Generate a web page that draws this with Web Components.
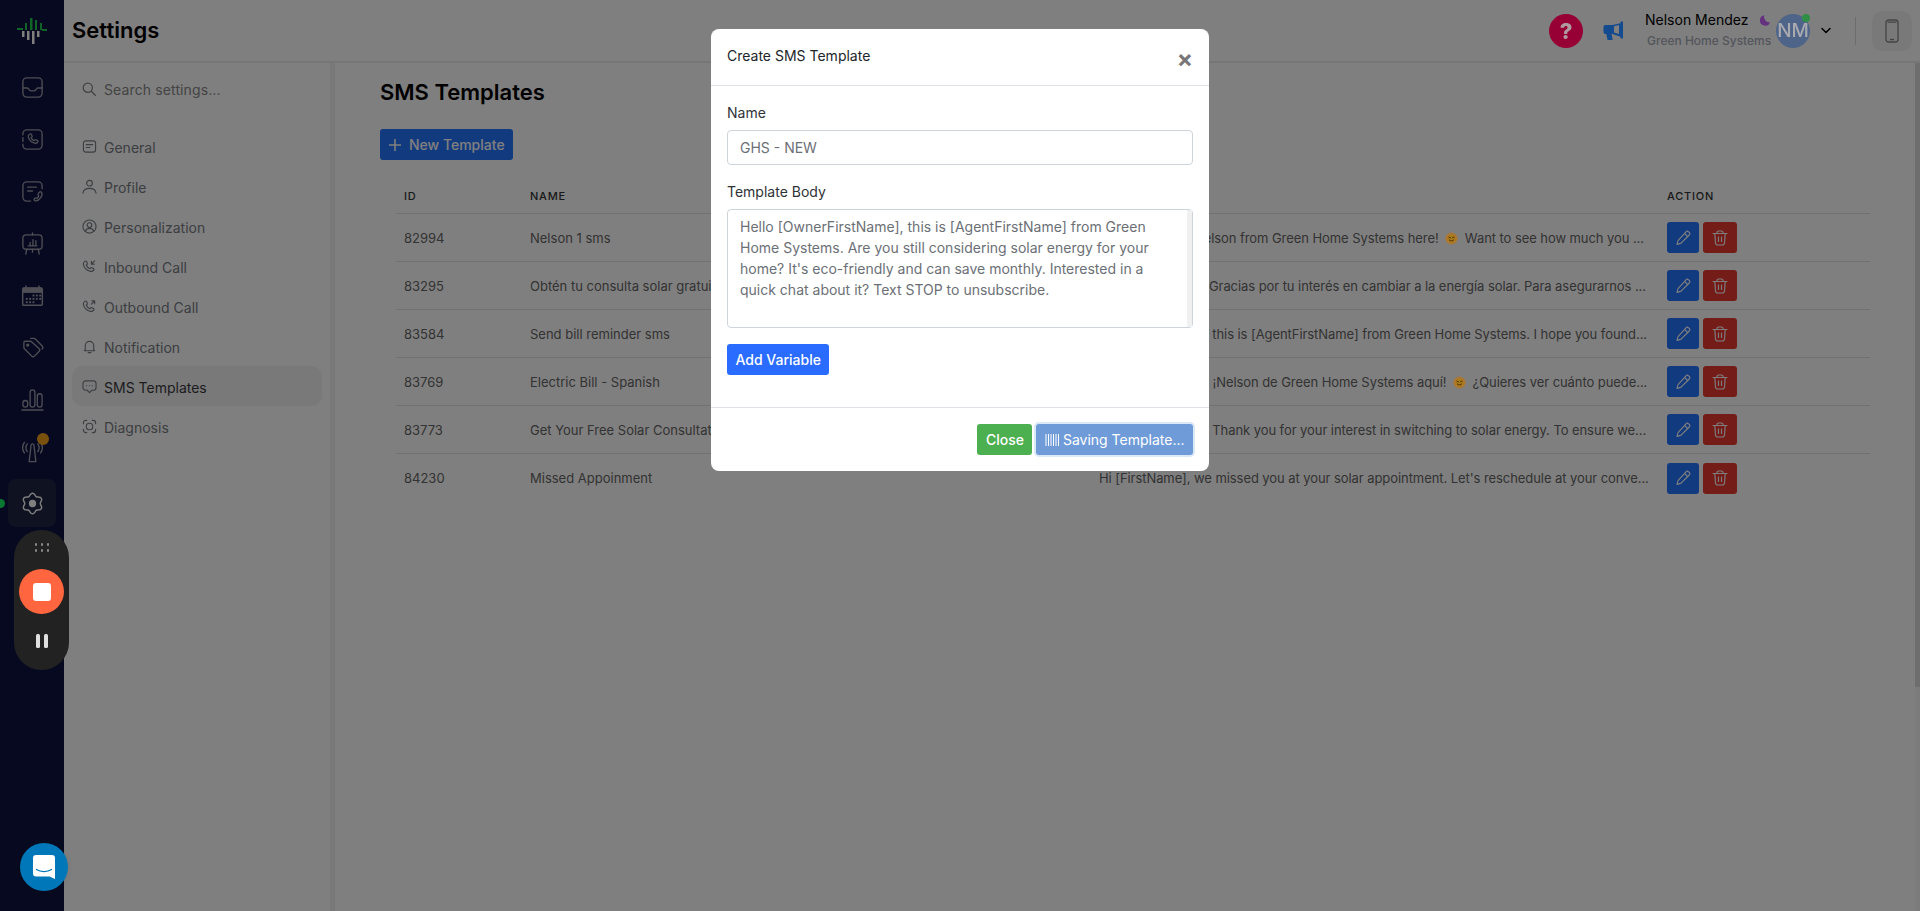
<!DOCTYPE html>
<html lang="en">
<head>
<meta charset="utf-8">
<title>Settings - SMS Templates</title>
<style>
  html, body { margin: 0; height: 100%; overflow: hidden; background: #fff; }
  body { font-family: Inter, "Noto Sans", sans-serif; font-size: 14px; }
</style>
</head>
<body>
<app-shell>
  <rail-nav slot="rail">
    <rail-item icon="inbox"></rail-item>
    <rail-item icon="phone"></rail-item>
    <rail-item icon="callnote"></rail-item>
    <rail-item icon="board"></rail-item>
    <rail-item icon="calendar"></rail-item>
    <rail-item icon="tags"></rail-item>
    <rail-item icon="chart"></rail-item>
    <rail-item icon="antenna" badge></rail-item>
    <rail-item icon="gear" active></rail-item>
  </rail-nav>
  <top-bar slot="top" heading="Settings"></top-bar>
  <settings-menu slot="menu">
    <menu-item icon="general">General</menu-item>
    <menu-item icon="profile">Profile</menu-item>
    <menu-item icon="personal">Personalization</menu-item>
    <menu-item icon="inbound">Inbound Call</menu-item>
    <menu-item icon="outbound">Outbound Call</menu-item>
    <menu-item icon="bell">Notification</menu-item>
    <menu-item icon="sms" active>SMS Templates</menu-item>
    <menu-item icon="diagnosis">Diagnosis</menu-item>
  </settings-menu>
  <sms-page slot="page">
    <sms-row rid="82994" name="Nelson 1 sms">Hi [FirstName], Nelson from Green Home Systems here! <sun-emoji></sun-emoji> Want to see how much you ...</sms-row>
    <sms-row rid="83295" name="Obtén tu consulta solar gratuita">Hola [FirstName]! Gracias por tu interés en cambiar a la energía solar. Para asegurarnos ...</sms-row>
    <sms-row rid="83584" name="Send bill reminder sms">Hello [FirstName], this is [AgentFirstName] from Green Home Systems. I hope you found...</sms-row>
    <sms-row rid="83769" name="Electric Bill - Spanish">Hola [FirstName]!&nbsp; ¡Nelson de Green Home Systems aquí! <sun-emoji></sun-emoji> ¿Quieres ver cuánto puede...</sms-row>
    <sms-row rid="83773" name="Get Your Free Solar Consultation">Hello [FirstName]! Thank you for your interest in switching to solar energy. To ensure we...</sms-row>
    <sms-row rid="84230" name="Missed Appoinment">Hi [FirstName], we missed you at your solar appointment. Let's reschedule at your conve...</sms-row>
  </sms-page>
</app-shell>

<modal-dialog heading="Create SMS Template"></modal-dialog>
<recorder-widget></recorder-widget>
<chat-launcher></chat-launcher>

<script>
const line = 'fill="none" stroke="currentColor" stroke-linecap="round" stroke-linejoin="round"'

// six lobed cog outline, lobes at top and bottom
function gearPath() {
  let d = ''
  for (let i = 0; i < 96; i++) {
    const a = i / 96 * Math.PI * 2
    const r = 9.4 + 1.3 * Math.cos(6 * a)
    const x = 12 + r * Math.sin(a)
    const y = 12 - r * Math.cos(a)
    d += (i ? 'L' : 'M') + x.toFixed(2) + ' ' + y.toFixed(2)
  }
  return d + 'z'
}

const railIcons = {
  inbox: `<svg viewBox="0 0 24 24" ${line} stroke-width="1.400"><rect x="2" y="2" width="20" height="20" rx="4"/><path d="M2 12.500h4.500c1 0 1.300 .6 1.700 1.400.4 .9 1.200 1.600 2.300 1.600h3c1.100 0 1.900-.7 2.300-1.600.4-.8 .7-1.400 1.700-1.400H22"/></svg>`,
  phone: `<svg viewBox="0 0 24 24" ${line} stroke-width="1.400"><path d="M2 7V6a4 4 0 0 1 4-4h12a4 4 0 0 1 4 4v12a4 4 0 0 1-4 4H6a4 4 0 0 1-4-4v-1M2 10v4"/><path d="M9 6.500c.7-.6 1.500-.4 1.900 .3l.6 1.300c.3 .6 .2 1.200-.3 1.600l-.6 .5c.5 1.400 1.500 2.400 3 3l.5-.6c.4-.5 1-.6 1.600-.3l1.300 .6c.8 .4 1 1.200 .3 1.900-1 1-2.400 1.300-3.800 .8-3-1-5-3.100-5.800-6.100-.3-1.200 .1-2.200 1.300-3z"/></svg>`,
  callnote: `<svg viewBox="0 0 24 24" ${line} stroke-width="1.400"><path d="M10 22H6a4 4 0 0 1-4-4V6a4 4 0 0 1 4-4h12a4 4 0 0 1 4 4v3"/><path d="M7 7.500h9M7 11.500h5"/><path d="M19.500 12.500c.8-.5 1.600-.2 2 .5.700 1.400 .5 3.300-.9 5.300-1.400 2-3.400 3.400-5.200 3.500-1.300 .1-2.100-1.200-1.500-2.200.5-.7 1.100-1.100 1.800-1 .5 .1 .8 .3 1.100 .5 .8-.5 1.400-1.400 1.700-2.400-.3-.3-.6-.6-.7-1.100-.1-.8 .3-1.600 .7-2.100z"/></svg>`,
  board: `<svg viewBox="0 0 24 24" ${line} stroke-width="1.400"><path d="M12 1v2"/><rect x="2" y="3" width="20" height="15" rx="3.500"/><path d="M7.500 14.500h9M9.500 14v-3M12.500 14V8M15.500 14v-5M6 18l-1 5M18 18l1 5M12 18v3"/></svg>`,
  calendar: `<svg viewBox="0 0 24 24"><path d="M3 3.500h1.500V1.500h1.500v2h12v-2h1.500v2H21a2 2 0 0 1 2 2V21a2 2 0 0 1-2 2H3a2 2 0 0 1-2-2V5.500a2 2 0 0 1 2-2zm-.5 5.500V21c0 .3 .2 .5 .5 .5h18c.3 0 .5-.2 .5-.5V9z" fill="currentColor" fill-rule="evenodd"/><path d="M2 3.800h20v5.200H2z" fill="currentColor"/><g fill="currentColor"><rect x="12" y="11" width="2" height="2"/><rect x="15.500" y="11" width="2" height="2"/><rect x="19" y="11" width="2" height="2"/><rect x="5" y="14.500" width="2" height="2"/><rect x="8.500" y="14.500" width="2" height="2"/><rect x="12" y="14.500" width="2" height="2"/><rect x="15.500" y="14.500" width="2" height="2"/><rect x="19" y="14.500" width="2" height="2"/><rect x="5" y="18" width="2" height="2"/><rect x="8.500" y="18" width="2" height="2"/><rect x="12" y="18" width="2" height="2"/></g></svg>`,
  tags: `<svg viewBox="0 0 24 24" ${line} stroke-width="1.400"><path d="M9.500 5.500H4.500a1.500 1.500 0 0 0-1.500 1.500v5c0 .5 .2 1 .6 1.400l7.600 7.600c.8 .8 2 .8 2.800 0l5-5c.8-.8 .8-2 0-2.800L11 5.900a2 2 0 0 0-1.500-.4z"/><path d="M10 2.500h3.500c.5 0 1 .2 1.400 .6l7 7c1.100 1.100 1.100 2.500 .2 3.500"/><circle cx="7" cy="9.500" r="1" fill="currentColor"/></svg>`,
  chart: `<svg viewBox="0 0 24 24" ${line} stroke-width="1.400"><rect x="2" y="13" width="5" height="7" rx="2.500"/><rect x="9.500" y="2" width="5" height="18" rx="2.500"/><rect x="17" y="6" width="5" height="14" rx="2.500"/><path d="M1 23h22"/></svg>`,
  antenna: `<svg viewBox="0 0 24 24" ${line} stroke-width="1.400"><path d="M12 4c-.8 0-1.400 .5-1.500 1.300L8.500 22.500h7L13.500 5.300C13.400 4.500 12.800 4 12 4z"/><path d="M6.500 4a7 7 0 0 0 0 8M3.500 2.500a10 10 0 0 0 0 11M17.500 4a7 7 0 0 1 0 8M20.500 2.500a10 10 0 0 1 0 11"/></svg>`,
  gear: `<svg viewBox="0 0 24 24" ${line} stroke-width="1.500"><path d="${gearPath()}"/><circle cx="12" cy="12" r="3.800" fill="currentColor" stroke="none"/></svg>`
}

const menuIcons = {
  general: `<svg viewBox="0 0 16 16" ${line} stroke-width="1.200"><rect x="1.500" y="2" width="13" height="12" rx="2.500"/><path d="M4.500 6h7M4.500 9h4"/></svg>`,
  profile: `<svg viewBox="0 0 16 16" ${line} stroke-width="1.200"><circle cx="8" cy="4.500" r="3"/><path d="M1 15c.5-3.400 3.300-5 7-5s6.500 1.600 7 5"/></svg>`,
  personal: `<svg viewBox="0 0 16 16" ${line} stroke-width="1.200"><circle cx="8" cy="8" r="7"/><circle cx="8" cy="6.500" r="2.500"/><path d="M3.500 13c.8-2 2.400-3 4.500-3s3.700 1 4.500 3"/></svg>`,
  inbound: `<svg viewBox="0 0 16 16" ${line} stroke-width="1.200"><path d="M3 2.500c.7-.7 1.500-.5 1.900 .3l.7 1.400c.3 .6 .2 1.200-.3 1.600l-.7 .6c.7 1.900 2 3.300 3.900 4l.6-.7c.4-.5 1-.6 1.600-.3l1.400 .7c.8 .4 1 1.200 .3 1.900-1.100 1.100-2.500 1.500-4 1-3.500-1.100-6-3.700-6.900-7.100-.3-1.300 .2-2.500 1.500-3.400z"/><path d="M13.500 2 10 5.500M10 2.500v3h3"/></svg>`,
  outbound: `<svg viewBox="0 0 16 16" ${line} stroke-width="1.200"><path d="M3 2.500c.7-.7 1.500-.5 1.900 .3l.7 1.400c.3 .6 .2 1.200-.3 1.600l-.7 .6c.7 1.900 2 3.300 3.900 4l.6-.7c.4-.5 1-.6 1.600-.3l1.400 .7c.8 .4 1 1.200 .3 1.900-1.100 1.100-2.500 1.500-4 1-3.500-1.100-6-3.700-6.900-7.100-.3-1.300 .2-2.500 1.500-3.400z"/><path d="M10 5.500 13.500 2M10.500 2h3v3"/></svg>`,
  bell: `<svg viewBox="0 0 16 16" ${line} stroke-width="1.200"><path d="M3.500 11.500V7a4.500 4.500 0 0 1 9 0v4.500l1 1H2.500z"/><path d="M6.500 14.500h3"/></svg>`,
  sms: `<svg viewBox="0 0 16 16" ${line} stroke-width="1.200"><path d="M4 2h8a3 3 0 0 1 3 3v4a3 3 0 0 1-3 3h-1.500L8 14.500 5.500 12H4a3 3 0 0 1-3-3V5a3 3 0 0 1 3-3z"/><path d="M5 7h.01M8 7h.01M11 7h.01"/></svg>`,
  diagnosis: `<svg viewBox="0 0 16 16" ${line} stroke-width="1.200"><path d="M1.500 5V4a2.500 2.500 0 0 1 2.500-2.500h1M11 1.500h1A2.500 2.500 0 0 1 14.500 4v1M14.500 11v1a2.500 2.500 0 0 1-2.500 2.500h-1M5 14.500H4A2.500 2.500 0 0 1 1.500 12v-1"/><circle cx="8" cy="8" r="3.500"/></svg>`
}

class AppShell extends HTMLElement {
  constructor() {
    super()
    this.attachShadow({ mode: 'open' })
    this.shadowRoot.innerHTML = `
      <style>
        :host { display: flex; width: 100%; height: 911px; overflow: hidden; }
        .main { flex: 1; min-width: 0; display: flex; flex-direction: column; }
        .body { flex: 1; min-height: 0; display: flex; }
      </style>
      <slot name="rail"></slot>
      <div class="main">
        <slot name="top"></slot>
        <div class="body">
          <slot name="menu"></slot>
          <slot name="page"></slot>
        </div>
      </div>`
  }
}

class RailNav extends HTMLElement {
  constructor() {
    super()
    this.attachShadow({ mode: 'open' })
    this.shadowRoot.innerHTML = `
      <style>
        :host { display: block; width: 64px; flex: none; background: #0f1340; }
        .logo { height: 63px; display: flex; align-items: center; justify-content: center; }
        .logo svg { width: 64px; height: 63px; display: block; }
        .list { display: flex; flex-direction: column; align-items: center; gap: 4px; }
      </style>
      <div class="logo">
        <svg viewBox="0 0 64 63">
          <g fill="#22c84f">
            <rect x="17" y="28" width="6" height="2"/><rect x="25" y="23" width="2" height="7"/><rect x="30" y="18" width="2.500" height="12"/>
            <rect x="35" y="20" width="2" height="10"/><rect x="40" y="23" width="2" height="7"/><rect x="42" y="29" width="5" height="2"/>
          </g>
          <g fill="#ffffff">
            <rect x="22" y="31" width="2.500" height="6"/><rect x="27" y="31" width="2.500" height="9"/><rect x="32" y="31" width="2.500" height="13"/><rect x="37" y="31" width="2.500" height="6"/>
          </g>
        </svg>
      </div>
      <div class="list"><slot></slot></div>`
  }
}

class RailItem extends HTMLElement {
  connectedCallback() {
    const active = this.hasAttribute('active')
    this.attachShadow({ mode: 'open' })
    this.shadowRoot.innerHTML = `
      <style>
        :host { display: block; width: 48px; height: 48px; position: relative; border-radius: 8px; color: ${active ? '#fff' : '#9c9ca8'}; background: ${active ? '#1f2440' : 'none'}; }
        .box { width: 100%; height: 100%; display: flex; align-items: center; justify-content: center; }
        svg { width: 23px; height: 23px; display: block; }
        .badge { position: absolute; width: 12px; height: 12px; border-radius: 50%; background: #f5a11a; top: 6px; left: 29px; }
        .dot { position: absolute; width: 9px; height: 9px; border-radius: 50%; background: #12f060; left: -12px; top: 20px; }
      </style>
      <div class="box">${railIcons[this.getAttribute('icon')]}</div>
      ${this.hasAttribute('badge') ? '<span class="badge"></span>' : ''}
      ${active ? '<span class="dot"></span>' : ''}`
  }
}

class TopBar extends HTMLElement {
  connectedCallback() {
    this.attachShadow({ mode: 'open' })
    this.shadowRoot.innerHTML = `
      <style>
        :host { display: flex; align-items: center; height: 61px; flex: none; border-bottom: 2px solid #ececec; background: #fff; padding-right: 8px; }
        h1 { margin: 0 0 0 8px; font-size: 22px; font-weight: 600; color: #000; flex: 1; line-height: 1; position: relative; top: -1px; }
        .help { width: 34px; height: 34px; border-radius: 50%; background: #960034; color: #b09aa0; font-size: 22px; font-weight: 800; display: flex; align-items: center; justify-content: center; position: relative; z-index: 20; margin-right: 20px; }
        .horn { width: 21px; height: 20px; margin-right: 21px; display: block; position: relative; z-index: 20; }
        .who { width: 126px; margin-right: 5px; line-height: 1; margin-top: -2px; }
        .name { display: flex; align-items: center; font-size: 14px; color: #000; white-space: nowrap; }
        .name svg { width: 11px; height: 12px; margin-left: 12px; }
        .org { font-size: 12px; font-weight: 500; color: #a8acb8; margin-top: 8px; margin-left: 2px; white-space: nowrap; }
        .avatar { width: 34px; height: 34px; border-radius: 50%; background: #4f6489; color: #a9a9b0; font-size: 19px; font-weight: 500; display: flex; align-items: center; justify-content: center; position: relative; z-index: 20; }
        .avatar i { position: absolute; width: 8px; height: 8px; border-radius: 50%; background: #2f8f45; top: 0; right: 0; }
        .chev { width: 10px; height: 7px; margin-left: 11px; display: block; }
        .sep { width: 1px; height: 28px; background: #d8d8d8; margin: 0 16px 0 24px; }
        .device { width: 40px; height: 40px; border-radius: 10px; background: #f3f3f3; display: flex; align-items: center; justify-content: center; color: #888; }
        .device svg { width: 16px; height: 24px; display: block; }
      </style>
      <h1>${this.getAttribute('heading')}</h1>
      <div class="help">?</div>
      <svg class="horn" viewBox="0 0 21 20"><path d="M17.500 0.500h2.500v17h-2.500v-1.800L9.500 13H8.500l1.200 6H4.500L3.300 13H2.500A2 2 0 0 1 .5 11V6A2 2 0 0 1 2.500 4H9.500L17.500 2.300z" fill="#144a8e"/><path d="M11 5.300v6.200l5 1.600V3.900z" fill="#808080"/></svg>
      <div class="who">
        <div class="name">Nelson Mendez<svg viewBox="0 0 12 12"><path d="M5 .5a6 6 0 1 0 6.500 8A6 6 0 0 1 5 .5z" fill="#c864ff"/></svg></div>
        <div class="org">Green Home Systems</div>
      </div>
      <div class="avatar">NM<i></i></div>
      <svg class="chev" viewBox="0 0 10 7"><path d="M1 1.500 5 5.500l4-4" fill="none" stroke="#000" stroke-width="1.500" stroke-linecap="round" stroke-linejoin="round"/></svg>
      <div class="sep"></div>
      <div class="device"><svg viewBox="0 0 16 24" ${line} stroke-width="1.300"><rect x="2" y="1" width="12" height="22" rx="2.500"/><path d="M4 3.200h8M6.500 20.500h3"/></svg></div>`
  }
}

class SettingsMenu extends HTMLElement {
  constructor() {
    super()
    this.attachShadow({ mode: 'open' })
    this.shadowRoot.innerHTML = `
      <style>
        :host { display: block; width: 266px; flex: none; box-sizing: content-box; border-right: 5px solid #f2f2f2; }
        .search { display: flex; align-items: center; gap: 8px; height: 52px; padding-left: 18px; color: #888; font-size: 14px; letter-spacing: .12px; }
        .search svg { width: 14px; height: 14px; display: block; }
        .list { display: flex; flex-direction: column; padding: 0 8px; margin-top: 11px; width: 250px; }
      </style>
      <div class="search">
        <svg viewBox="0 0 14 14" ${line} stroke-width="1.300"><circle cx="5.800" cy="5.800" r="4.600"/><path d="m9.300 9.300 4 4"/></svg>
        <span>Search settings...</span>
      </div>
      <div class="list"><slot></slot></div>`
  }
}

class MenuItem extends HTMLElement {
  connectedCallback() {
    const active = this.hasAttribute('active')
    this.attachShadow({ mode: 'open' })
    this.shadowRoot.innerHTML = `
      <style>
        :host { display: flex; align-items: center; height: 40px; gap: 7px; padding-left: 10px; border-radius: 10px; font-size: 14px; color: ${active ? '#3a3a3e' : '#787c84'}; background: ${active ? '#f3f3f3' : 'none'}; }
        svg { width: 15px; height: 15px; display: block; color: #787c84; }
        span { padding-top: 2px; }
      </style>
      ${menuIcons[this.getAttribute('icon')]}
      <span><slot></slot></span>`
  }
}

class SmsPage extends HTMLElement {
  constructor() {
    super()
    this.attachShadow({ mode: 'open' })
    this.shadowRoot.innerHTML = `
      <style>
        :host { flex: 1; min-width: 0; display: flex; }
        .content { flex: 1; min-width: 0; padding: 0 45px; }
        h2 { margin: 0; font-size: 22px; font-weight: 600; color: #000; line-height: 27px; padding-top: 16px; }
        .new { margin-top: 23px; width: 133px; height: 31px; box-sizing: border-box; background: #2474ff; color: #fff; border-radius: 3px; display: flex; align-items: center; gap: 8px; padding-left: 9px; font-size: 14px; font-weight: 500; }
        .new svg { width: 12px; height: 12px; display: block; }
        .table { margin: 13px 0 0 16px; }
        .head { display: grid; grid-template-columns: 126px 569px 568px 1fr; height: 41px; align-items: center; border-bottom: 1px solid #e3e3e3; box-sizing: border-box; padding-top: 5px; font-size: 11px; font-weight: 500; letter-spacing: .8px; color: #333; }
        .head span { padding-left: 8px; }
        .bar { width: 5px; flex: none; background: #f8f8f8; }
        .bar div { height: 624px; background: #dcdcdc; }
      </style>
      <div class="content">
        <h2>SMS Templates</h2>
        <div class="new"><svg viewBox="0 0 12 12"><path d="M6 .5v11M.5 6h11" stroke="#fff" stroke-width="1.600" stroke-linecap="round"/></svg>New Template</div>
        <div class="table">
          <div class="head"><span>ID</span><span>NAME</span><span></span><span>ACTION</span></div>
          <slot></slot>
        </div>
      </div>
      <div class="bar"><div></div></div>`
  }
}

class SmsRow extends HTMLElement {
  connectedCallback() {
    this.attachShadow({ mode: 'open' })
    this.shadowRoot.innerHTML = `
      <style>
        :host { display: grid; grid-template-columns: 126px 569px 568px 1fr; height: 48px; box-sizing: border-box; align-items: center; border-bottom: 1px solid #e3e3e3; font-size: 13px; color: #666; }
        :host(:last-child) { border-bottom: 0; }
        .cell { padding-left: 8px; white-space: nowrap; overflow: hidden; }
        .msg { letter-spacing: -.07px; }
        .acts { display: flex; gap: 4px; padding-left: 8px; }
        .btn { height: 31px; border-radius: 3px; display: flex; align-items: center; justify-content: center; color: #fff; }
        .edit { width: 32px; background: #2474ff; }
        .del { width: 34px; background: #e83a30; }
        .btn svg { width: 16px; height: 16px; display: block; }
      </style>
      <div class="cell">${this.getAttribute('rid')}</div>
      <div class="cell">${this.getAttribute('name')}</div>
      <div class="cell msg"><slot></slot></div>
      <div class="acts">
        <div class="btn edit"><svg viewBox="0 0 16 16" ${line} stroke-width="1.100"><path d="M11 1.800c.7-.7 1.900-.7 2.600 0l.6 .6c.7 .7 .7 1.900 0 2.600l-8.400 8.400-3.800 1 1-3.800z"/><path d="m9.500 3.300 3.200 3.200"/></svg></div>
        <div class="btn del"><svg viewBox="0 0 16 16" ${line} stroke-width="1.100"><path d="M1 3.500h14M5 3.500V2.500c0-.9 .6-1.500 1.500-1.500h3c.9 0 1.500 .6 1.500 1.500v1M2.800 3.500l.7 9.500c.1 1.200 .9 2 2 2h5c1.100 0 1.900-.8 2-2l.7-9.500M6.500 7v4.500M9.500 7v4.500"/></svg></div>
      </div>`
  }
}

class SunEmoji extends HTMLElement {
  constructor() {
    super()
    this.attachShadow({ mode: 'open' })
    this.shadowRoot.innerHTML = `
      <style>
        :host { display: inline-block; width: 13px; height: 13px; margin: 0 3px; vertical-align: -2px; position: relative; z-index: 20; }
        svg { width: 13px; height: 13px; display: block; }
      </style>
      <svg viewBox="0 0 13 13"><path d="M6.500 0l1 1.600 1.700-.9.400 1.900 1.900-.1-.2 1.900 1.700.7-1 1.500 1 1.400-1.700.8.200 1.900-1.900-.1-.4 1.800-1.700-.8-1 1.400-1-1.400-1.700.8-.4-1.800-1.900.1.200-1.900L0 8l1-1.400-1-1.500 1.700-.7-.2-1.900 1.900.1.400-1.900 1.700.9z" fill="#b0762a"/><circle cx="6.500" cy="6.500" r="4" fill="#a97c20"/><path d="M3.900 5.200l1.700.6M9.100 5.200l-1.700.6M4.200 8c1.100 1.200 3.500 1.200 4.600 0" stroke="#4a2c00" stroke-width=".9" fill="none" stroke-linecap="round"/></svg>`
  }
}

class ModalDialog extends HTMLElement {
  connectedCallback() {
    this.attachShadow({ mode: 'open' })
    this.shadowRoot.innerHTML = `
      <style>
        :host { position: fixed; inset: 0; z-index: 10; background: rgba(0,0,0,.5); display: flex; justify-content: center; align-items: flex-start; padding-top: 29px; box-sizing: border-box; font-size: 14px; }
        .box { width: 498px; height: 442px; background: #fff; border-radius: 8px; display: flex; flex-direction: column; color: #2f3236; }
        .head { height: 57px; flex: none; border-bottom: 1px solid #dee2e6; display: flex; align-items: center; justify-content: space-between; padding: 0 16px 4px; box-sizing: border-box; color: #212529; }
        .close { color: #777; font-size: 24px; font-weight: 700; line-height: 1; position: relative; top: 4px; }
        .form { flex: 1; padding: 0 16px; display: flex; flex-direction: column; }
        label { display: block; height: 20px; line-height: 20px; }
        .name { margin-top: 17px; }
        .input { height: 35px; box-sizing: border-box; border: 1px solid #ced4da; border-radius: 4px; margin-top: 7px; padding: 0 12px; display: flex; align-items: center; color: #6b6f76; }
        .body-label { margin-top: 17px; }
        .area { height: 119px; box-sizing: border-box; border: 1px solid #ced4da; border-radius: 4px; margin-top: 7px; display: flex; }
        .text { flex: 1; padding: 6px 12px; line-height: 21px; color: #6b6f76; }
        .track { width: 5px; background: #f0f0f0; }
        .add { margin-top: 16px; align-self: flex-start; height: 31px; padding: 0 8.500px; background: #2a6cff; color: #fff; border-radius: 3px; display: flex; align-items: center; font-weight: 500; }
        .foot { height: 64px; flex: none; border-top: 1px solid #dee2e6; box-sizing: border-box; display: flex; justify-content: flex-end; align-items: center; gap: 4px; padding: 0 16px; }
        .btn { height: 31px; border-radius: 3px; display: flex; align-items: center; color: #fff; font-weight: 500; box-sizing: border-box; }
        .green { background: #4caf50; padding: 0 8.500px; }
        .saving { background: #6f9bd8; padding: 0 8.500px; box-shadow: 0 0 0 2px #dbe8f8; gap: 4px; font-weight: 400; }
        .saving svg { width: 14px; height: 14px; display: block; }
      </style>
      <div class="box">
        <div class="head"><span>${this.getAttribute('heading')}</span><span class="close">&times;</span></div>
        <div class="form">
          <label class="name">Name</label>
          <div class="input">GHS - NEW</div>
          <label class="body-label">Template Body</label>
          <div class="area">
            <div class="text">Hello [OwnerFirstName], this is [AgentFirstName] from Green Home Systems. Are you still considering solar energy for your home? It's eco-friendly and can save monthly. Interested in a quick chat about it? Text STOP to unsubscribe.</div>
            <div class="track"></div>
          </div>
          <div class="add">Add Variable</div>
        </div>
        <div class="foot">
          <div class="btn green">Close</div>
          <div class="btn saving"><svg viewBox="0 0 14 14"><path d="M1 1v12M3.500 1v12M6 1v12M8.500 1v12M11 1v12M13.500 1v12" stroke="#fff" stroke-width="1" fill="none"/></svg>Saving Template...</div>
        </div>
      </div>`
  }
}

class RecorderWidget extends HTMLElement {
  constructor() {
    super()
    this.attachShadow({ mode: 'open' })
    this.shadowRoot.innerHTML = `
      <style>
        :host { position: fixed; left: 14px; top: 530px; z-index: 20; width: 55px; height: 140px; border-radius: 28px; background: #222; display: flex; flex-direction: column; align-items: center; }
        .grip { display: grid; grid-template-columns: repeat(3, 2px); gap: 3px 4px; margin-top: 13px; }
        .grip i { width: 2px; height: 3px; background: #888; border-radius: 1px; }
        .stop { width: 45px; height: 45px; border-radius: 50%; background: #ff6640; margin-top: 17px; display: flex; align-items: center; justify-content: center; }
        .stop i { width: 18px; height: 18px; border-radius: 3px; background: #fff; }
        .pause { display: flex; gap: 4px; margin-top: 20px; }
        .pause i { width: 4px; height: 14px; border-radius: 1.500px; background: #e0e0e0; }
      </style>
      <div class="grip"><i></i><i></i><i></i><i></i><i></i><i></i></div>
      <div class="stop"><i></i></div>
      <div class="pause"><i></i><i></i></div>`
  }
}

class ChatLauncher extends HTMLElement {
  constructor() {
    super()
    this.attachShadow({ mode: 'open' })
    this.shadowRoot.innerHTML = `
      <style>
        :host { position: fixed; left: 20px; top: 843px; z-index: 20; width: 48px; height: 48px; border-radius: 50%; background: #0077b8; box-shadow: 0 1px 6px rgba(0,0,0,.1); display: flex; align-items: center; justify-content: center; }
        svg { width: 22px; height: 24px; display: block; }
      </style>
      <svg viewBox="0 0 22 24"><path d="M3 0h16a3 3 0 0 1 3 3v21l-5.500-2.500H3a3 3 0 0 1-3-3V3a3 3 0 0 1 3-3z" fill="#fff"/><path d="M3.500 14.500c4 2.700 11 2.700 15 0" fill="none" stroke="#0077b8" stroke-width="1.300" stroke-linecap="round"/></svg>`
  }
}

customElements.define('app-shell', AppShell)
customElements.define('rail-nav', RailNav)
customElements.define('rail-item', RailItem)
customElements.define('top-bar', TopBar)
customElements.define('settings-menu', SettingsMenu)
customElements.define('menu-item', MenuItem)
customElements.define('sms-page', SmsPage)
customElements.define('sms-row', SmsRow)
customElements.define('sun-emoji', SunEmoji)
customElements.define('modal-dialog', ModalDialog)
customElements.define('recorder-widget', RecorderWidget)
customElements.define('chat-launcher', ChatLauncher)
</script>
</body>
</html>
